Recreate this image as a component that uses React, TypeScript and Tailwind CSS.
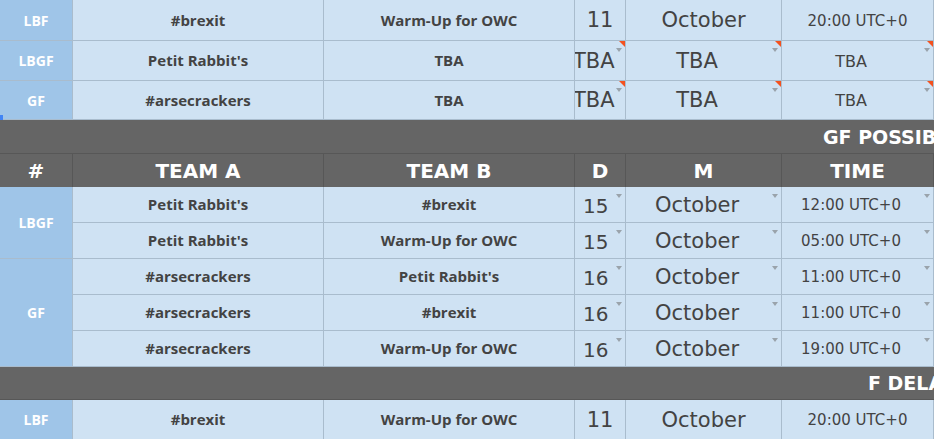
import React from 'react';

const line = 'border-[#a9bccd]';
const teamFont = "font-['Open_Sans','DejaVu_Sans',sans-serif]";
const numFont = "font-['DejaVu_Sans','Noto_Sans',sans-serif]";

function Arrow() {
  return (
    <span className="absolute right-[3px] top-[7px] w-0 h-0 border-l-[3px] border-r-[3px] border-t-[4px] border-l-transparent border-r-transparent border-t-[#9aa3ab]" />
  );
}

function Note() {
  return (
    <span className="absolute right-0 top-0 w-0 h-0 border-t-[6px] border-l-[6px] border-t-[#f4511e] border-l-transparent" />
  );
}

function Label({ text, rows = 1 }: { text: string; rows?: number }) {
  const span = rows === 3 ? 'row-span-3' : rows === 2 ? 'row-span-2' : '';
  return (
    <div
      className={`${span} bg-[#9fc5e8] border-r border-b ${line} flex items-center justify-center text-white text-[14px] font-bold ${teamFont}`}
    >
      {text}
    </div>
  );
}

function Team({ text }: { text: string }) {
  return (
    <div
      className={`bg-[#cfe2f3] border-r border-b ${line} flex items-center justify-center text-[#434343] text-[15px] font-bold whitespace-nowrap ${teamFont}`}
    >
      {text}
    </div>
  );
}

type Mode = 'plain' | 'drop' | 'tba';

function Day({ text, mode }: { text: string; mode: Mode }) {
  const align =
    mode === 'plain' ? 'justify-center' : mode === 'drop' ? 'justify-start pl-[8px]' : 'justify-start';
  return (
    <div
      className={`relative overflow-hidden bg-[#cfe2f3] border-r border-b ${line} flex items-center pt-[2px] ${align} text-[#434343] ${mode === 'drop' ? 'text-[20px]' : 'text-[21px]'} whitespace-nowrap ${numFont}`}
    >
      <span className={mode === 'tba' ? '-ml-[2px]' : ''}>{text}</span>
      {mode === 'tba' && <Note />}
      {mode !== 'plain' && <Arrow />}
    </div>
  );
}

function Month({ text, mode }: { text: string; mode: Mode }) {
  return (
    <div
      className={`relative bg-[#cfe2f3] border-r border-b ${line} flex items-center justify-center pt-[2px] ${mode === 'plain' ? '' : 'pr-[13px]'} text-[#434343] text-[21px] whitespace-nowrap ${numFont}`}
    >
      {text}
      {mode === 'tba' && <Note />}
      {mode !== 'plain' && <Arrow />}
    </div>
  );
}

function Time({ text, mode }: { text: string; mode: Mode }) {
  return (
    <div
      className={`relative bg-[#cfe2f3] border-r border-b ${line} flex items-center justify-center pt-[2px] ${mode === 'plain' ? '' : 'pr-[13px]'} text-[#434343] ${mode === 'tba' ? 'text-[16px]' : 'text-[15px]'} whitespace-nowrap ${numFont}`}
    >
      {text}
      {mode === 'tba' && <Note />}
      {mode !== 'plain' && <Arrow />}
    </div>
  );
}

function Band({ title, pad }: { title: string; pad: string }) {
  return (
    <div
      className={`col-span-6 bg-[#656565] border-b border-[#575757] flex items-center pt-[1px] ${pad} text-white text-[19px] font-bold whitespace-nowrap overflow-hidden ${numFont}`}
    >
      {title}
    </div>
  );
}

function Head({ text }: { text: string }) {
  return (
    <div
      className={`bg-[#656565] border-r border-[#575757] flex items-center justify-center pt-[1px] text-white text-[20px] font-bold ${numFont}`}
    >
      {text}
    </div>
  );
}

const possible = [
  ["Petit Rabbit's", '#brexit', '15', '12:00 UTC+0'],
  ["Petit Rabbit's", 'Warm-Up for OWC', '15', '05:00 UTC+0'],
  ['#arsecrackers', "Petit Rabbit's", '16', '11:00 UTC+0'],
  ['#arsecrackers', '#brexit', '16', '11:00 UTC+0'],
  ['#arsecrackers', 'Warm-Up for OWC', '16', '19:00 UTC+0'],
];

export default function App() {
  return (
    <div className="relative w-[934px] h-[439px] overflow-hidden bg-white">
      <div className="grid grid-cols-[73px_251px_251px_51px_156px_152px] grid-rows-[41px_40px_39px_34px_33px_36px_36px_36px_36px_36px_33px_40px]">
        {/* finals */}
        <Label text="LBF" />
        <Team text="#brexit" />
        <Team text="Warm-Up for OWC" />
        <Day text="11" mode="plain" />
        <Month text="October" mode="plain" />
        <Time text="20:00 UTC+0" mode="plain" />

        <Label text="LBGF" />
        <Team text="Petit Rabbit's" />
        <Team text="TBA" />
        <Day text="TBA" mode="tba" />
        <Month text="TBA" mode="tba" />
        <Time text="TBA" mode="tba" />

        <Label text="GF" />
        <Team text="#arsecrackers" />
        <Team text="TBA" />
        <Day text="TBA" mode="tba" />
        <Month text="TBA" mode="tba" />
        <Time text="TBA" mode="tba" />

        <Band title="GF POSSIBLE" pad="pl-[823px]" />

        <Head text="#" />
        <Head text="TEAM A" />
        <Head text="TEAM B" />
        <Head text="D" />
        <Head text="M" />
        <Head text="TIME" />

        {possible.map((r, i) => (
          <React.Fragment key={i}>
            {i === 0 && <Label text="LBGF" rows={2} />}
            {i === 2 && <Label text="GF" rows={3} />}
            <Team text={r[0]} />
            <Team text={r[1]} />
            <Day text={r[2]} mode="drop" />
            <Month text="October" mode="drop" />
            <Time text={r[3]} mode="drop" />
          </React.Fragment>
        ))}

        <Band title="F DELAYED" pad="pl-[868px]" />

        <Label text="LBF" />
        <Team text="#brexit" />
        <Team text="Warm-Up for OWC" />
        <Day text="11" mode="plain" />
        <Month text="October" mode="plain" />
        <Time text="20:00 UTC+0" mode="plain" />
      </div>
      {/* selection handle */}
      <span className="absolute left-0 top-[115px] w-[3px] h-[5px] bg-[#4285f4]" />
    </div>
  );
}
